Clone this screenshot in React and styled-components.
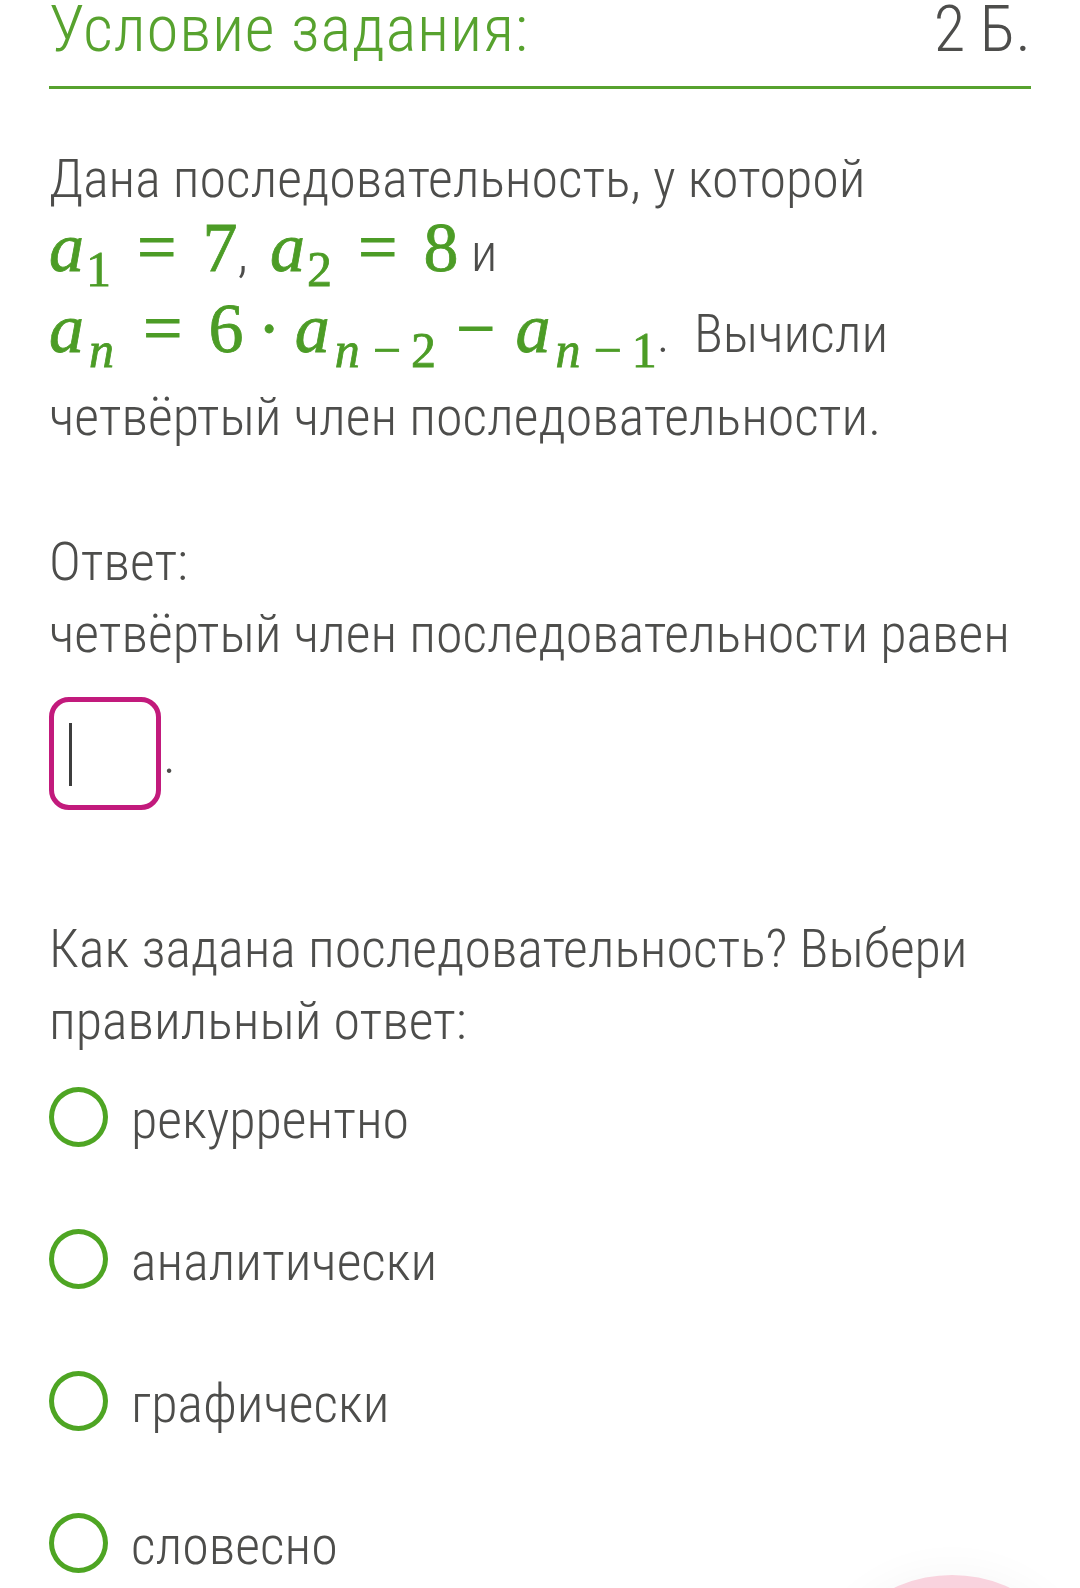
import React from 'react';
import styled, { createGlobalStyle } from 'styled-components';

const titleGreen = '#57a22e';
const mathGreen = '#4c9c26';
const radioGreen = '#4ea523';
const textGray = '#4d4d4b';
const magenta = '#c21a7c';

const GlobalStyle = createGlobalStyle`
  html, body {
    margin: 0;
    padding: 0;
    background: #fff;
    overflow: hidden;
  }
  body {
    font-family: "Roboto Condensed", Roboto, "Noto Sans", sans-serif;
    font-stretch: 87.5%;
    font-weight: 300;
    color: ${textGray};
  }
`;

const Page = styled.div`
  position: relative;
  width: 1080px;
  height: 1588px;
  padding: 0 49px;
  box-sizing: border-box;
  overflow: hidden;
`;

const Header = styled.header`
  display: flex;
  justify-content: space-between;
  align-items: baseline;
  padding-bottom: 28px;
  border-bottom: 3px solid ${titleGreen};
`;

const Title = styled.h1`
  margin: 0;
  font-size: 65px;
  line-height: 58px;
  letter-spacing: 0.8px;
  font-weight: 300;
  color: ${titleGreen};
`;

const Points = styled.span`
  font-size: 65px;
  line-height: 58px;
  color: ${textGray};
`;

const Text = styled.p`
  margin: ${(p) => p.$mt || 0}px 0 0;
  font-size: 54px;
  line-height: 72px;
`;

const NoWrap = styled.span`
  white-space: nowrap;
`;

// formula set like KaTeX output
const Formula = styled.span`
  display: inline-block;
  white-space: nowrap;
  font-family: "Liberation Serif", "DejaVu Serif", serif;
  font-stretch: 100%;
  font-size: 70px;
  line-height: 60px;
  font-weight: 400;
  color: ${mathGreen};
  -webkit-text-stroke: 0.8px ${mathGreen};
  padding-top: 3px;
  padding-bottom: ${(p) => p.$pb || 18}px;
  margin-left: ${(p) => p.$ml || 0}px;
`;

const V = styled.i`
  font-style: italic;
  margin-right: ${(p) => p.$kern ?? 4}px;
`;

const Sub = styled.span`
  font-size: 50px;
  line-height: 0;
  vertical-align: -15px;
  margin-left: 1px;
`;

const SubOp = styled.span`
  margin: 0 10px;
`;

const Rel = styled.span`
  margin: 0 26px;
`;

const Bin = styled.span`
  margin: 0 ${(p) => p.$gap || 20}px;
`;

const AnswerRow = styled.div`
  display: flex;
  align-items: flex-end;
  margin-top: 27px;
`;

const InputBox = styled.div`
  width: 112px;
  height: 113px;
  box-sizing: border-box;
  border: 5px solid ${magenta};
  border-radius: 20px;
  padding: 21px 0 0 15px;
`;

const Caret = styled.span`
  display: block;
  width: 3px;
  height: 63px;
  background: #3d3d3d;
`;

const Period = styled.span`
  font-size: 54px;
  line-height: 54px;
  margin: 0 0 28px 2px;
`;

const Options = styled.ul`
  list-style: none;
  margin: 27px 0 0;
  padding: 0;
  display: flex;
  flex-direction: column;
  gap: 70px;
`;

const Option = styled.li`
  display: flex;
  align-items: center;
  gap: 23px;
  font-size: 54px;
  line-height: 72px;
`;

const Radio = styled.span`
  flex: none;
  width: 59px;
  height: 60px;
  box-sizing: border-box;
  border: 5px solid ${radioGreen};
  border-radius: 50%;
  margin-bottom: 6px;
`;

const FloatingBubble = styled.div`
  position: absolute;
  left: 816px;
  top: 1575px;
  width: 272px;
  height: 272px;
  border-radius: 50%;
  background: #f9d3de;
  box-shadow: 0 -6px 40px rgba(0, 0, 0, 0.03);
`;

const options = ['рекуррентно', 'аналитически', 'графически', 'словесно'];

const App = () => (
  <Page>
    <GlobalStyle />
    <Header>
      <Title>Условие задания:</Title>
      <Points>2 Б.</Points>
    </Header>

    <Text $mt={54}>
      Дана последовательность, у которой{' '}
      <NoWrap>
        <Formula $pb={18}>
          <V $kern={1}>a</V><Sub>1</Sub><Rel>=</Rel>7
        </Formula>
        ,
      </NoWrap>{' '}
      <Formula $pb={18} $ml={10}>
        <V $kern={1}>a</V><Sub>2</Sub><Rel>=</Rel>8
      </Formula>{' '}
      и{' '}
      <NoWrap>
        <Formula $pb={22}>
          <V>a</V><Sub><V $kern={3}>n</V></Sub><Rel>=</Rel>6<Bin $gap={14}>·</Bin>
          <V>a</V><Sub><V $kern={3}>n</V><SubOp>−</SubOp>2</Sub><Bin>−</Bin>
          <V>a</V><Sub><V $kern={3}>n</V><SubOp>−</SubOp>1</Sub>
        </Formula>
        .
      </NoWrap>
      &nbsp; Вычисли четвёртый член последовательности.
    </Text>

    <Text $mt={73}>Ответ:</Text>
    <Text>четвёртый член последовательности равен</Text>
    <AnswerRow>
      <InputBox>
        <Caret />
      </InputBox>
      <Period>.</Period>
    </AnswerRow>

    <Text $mt={103}>Как задана последовательность? Выбери правильный ответ:</Text>
    <Options>
      {options.map((label) => (
        <Option key={label}>
          <Radio />
          {label}
        </Option>
      ))}
    </Options>

    <FloatingBubble />
  </Page>
);

export default App;
